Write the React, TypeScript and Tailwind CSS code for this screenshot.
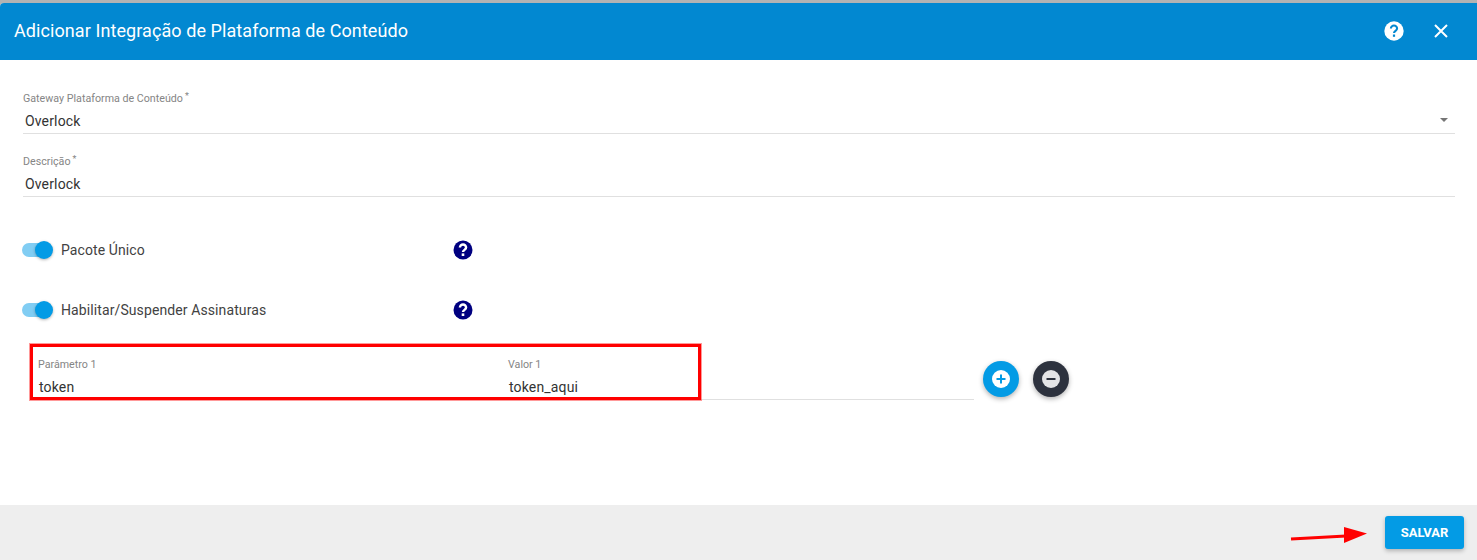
import React from 'react';

const roboto = { fontFamily: 'Roboto, "Liberation Sans", sans-serif' };

const HelpDot = () => (
  <svg width="20" height="20" viewBox="0 0 20 20" className="shrink-0">
    <circle cx="10" cy="10" r="9.5" fill="#000080" />
    <path d="M6.9 7.6a3.1 3.1 0 0 1 6.2 0c0 2.2-3.1 2.4-3.1 4.5" fill="none" stroke="#fff" strokeWidth="2.4" />
    <rect x="8.7" y="13.4" width="2.6" height="2.6" fill="#fff" />
  </svg>
);

const Field = ({ label, value, required }: { label: string; value: string; required?: boolean }) => (
  <div className="h-[49px] border-b border-[#e0e0e0] pl-0.5">
    <div className="-ml-0.5 h-[25px] pt-[7px] text-[10.7px] leading-[14px] text-[#858585]">
      {label}
      {required && <span className="ml-0.5 align-[3px] text-[9px] leading-none">*</span>}
    </div>
    <div className="h-[23px] text-[14px] leading-[23px] tracking-[0.15px] text-[#333333]">{value}</div>
  </div>
);

const Toggle = ({ label }: { label: string }) => (
  <div className="flex h-5 items-center">
    <div className="flex w-[431px] items-center">
      <div className="relative h-[14px] w-[30px] rounded-full bg-[#81cdf3]">
        <div className="absolute right-[-1px] top-[-2px] h-[18px] w-[18px] rounded-full bg-[#039be5] shadow-[0_1px_3px_rgba(0,0,0,0.3)]" />
      </div>
      <span className="ml-[9px] text-[14px] tracking-[0.1px] text-[#424242]">{label}</span>
    </div>
    <HelpDot />
  </div>
);

const RoundButton = ({ bg, fg, disc, kind }: { bg: string; fg: string; disc: string; kind: 'plus' | 'minus' }) => (
  <button className={`flex h-9 w-9 items-center justify-center rounded-full shadow-[0_2px_5px_rgba(0,0,0,0.3)] ${bg}`}>
    <svg width="18" height="18" viewBox="0 0 18 18">
      <circle cx="9" cy="9" r="9" fill={disc} />
      <rect x="4.5" y="8" width="9" height="2" fill={fg} />
      {kind === 'plus' && <rect x="8" y="4.5" width="2" height="9" fill={fg} />}
    </svg>
  </button>
);

export default function App() {
  return (
    <div className="relative h-[560px] w-[1477px] overflow-hidden bg-[#b3b3b3] pt-[3px]" style={roboto}>
      <div className="flex h-[557px] flex-col overflow-hidden rounded-tl-[4px] bg-white">
        {/* Cabeçalho */}
        <header className="flex h-[57px] shrink-0 items-center justify-between bg-[#0288d1] pb-[2px] pl-[14px] pr-[29px] text-white">
          <h1 className="text-[18px] font-normal tracking-[0.08px]">Adicionar Integração de Plataforma de Conteúdo</h1>
          <div className="flex items-center gap-[30px]">
            <svg width="20" height="20" viewBox="0 0 20 20">
              <circle cx="10" cy="10" r="9.7" fill="#fff" />
              <path d="M6.9 7.6a3.1 3.1 0 0 1 6.2 0c0 2.2-3.1 2.4-3.1 4.5" fill="none" stroke="#0288d1" strokeWidth="2.1" />
              <rect x="8.9" y="13.5" width="2.2" height="2.3" fill="#0288d1" />
            </svg>
            <svg width="14" height="14" viewBox="0 0 14 14">
              <path d="M1 1l12 12M13 1L1 13" stroke="#fff" strokeWidth="2" />
            </svg>
          </div>
        </header>

        {/* Formulário */}
        <main className="flex-1 pl-[23px] pr-[22px] pt-[25px]">
          <div className="relative">
            <Field label="Gateway Plataforma de Conteúdo" value="Overlock" required />
            <div className="absolute right-[7px] top-[33px] h-0 w-0 border-x-[4px] border-t-[4px] border-x-transparent border-t-[#757575]" />
          </div>
          <div className="mt-[14px]">
            <Field label="Descrição" value="Overlock" required />
          </div>

          <div className="-ml-px mt-[43px] flex flex-col gap-10">
            <Toggle label="Pacote Único" />
            <Toggle label="Habilitar/Suspender Assinaturas" />
          </div>

          <div className="mt-[25px] flex items-start pl-[15px]">
            <div className="flex h-[55px] w-[936px] border-b border-[#e0e0e0] pt-[13px]">
              <div className="w-[470px]">
                <div className="text-[10.7px] leading-[14px] text-[#858585]">Parâmetro 1</div>
                <div className="mt-[3px] pl-px text-[14px] leading-[25px] tracking-[0.15px] text-[#333333]">token</div>
              </div>
              <div>
                <div className="text-[10.7px] leading-[14px] text-[#858585]">Valor 1</div>
                <div className="mt-[3px] pl-px text-[14px] leading-[25px] tracking-[0.15px] text-[#333333]">token_aqui</div>
              </div>
            </div>
            <div className="ml-[9px] mt-[16px] flex gap-[14px]">
              <RoundButton bg="bg-[#039be5]" fg="#039be5" disc="#fff" kind="plus" />
              <RoundButton bg="bg-[#2d323e]" fg="#2d323e" disc="#e4e4e6" kind="minus" />
            </div>
          </div>
        </main>

        {/* Rodapé */}
        <footer className="flex h-[55px] shrink-0 items-center justify-end bg-[#eeeeee] pr-[13px]">
          <button className="h-[33px] w-[79px] rounded-[3px] bg-[#039be5] text-[13px] font-bold text-white shadow-[0_2px_4px_rgba(0,0,0,0.25)]">
            SALVAR
          </button>
        </footer>
      </div>

      {/* Anotações sobre o print */}
      <div className="absolute left-[30px] top-[344px] h-[56px] w-[671px] border-[3px] border-[#ff0000] shadow-[0_0_0_1px_rgba(255,0,0,0.4)]" />
      <svg className="absolute left-[1290px] top-[525px]" width="80" height="20" viewBox="0 0 80 20">
        <path d="M1 14L56 11" stroke="#ff0000" strokeWidth="3" />
        <polygon points="54,2 77,8.5 54,18" fill="#ff0000" />
      </svg>
    </div>
  );
}
